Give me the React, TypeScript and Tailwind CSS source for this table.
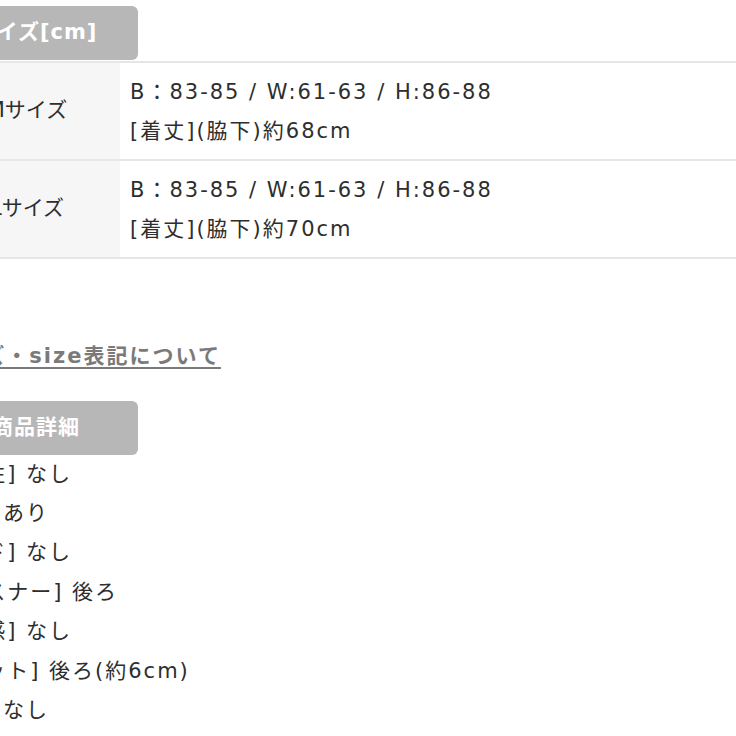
const sizes = [
  { label: "Mサイズ", spec: "B：83-85 / W:61-63 / H:86-88", length: "[着丈](脇下)約68cm" },
  { label: "Lサイズ", spec: "B：83-85 / W:61-63 / H:86-88", length: "[着丈](脇下)約70cm" },
];

const details = [
  "[伸縮性] なし",
  "[裏地] あり",
  "[パッド] なし",
  "[ファスナー] 後ろ",
  "[透け感] なし",
  "[スリット] 後ろ(約6cm)",
  "[光沢] なし",
];

function Tab({ children }: { children: React.ReactNode }) {
  return (
    <div className="flex h-[54px] w-[204px] items-center justify-center rounded-[6px] bg-[#b7b7b7] text-[21px] font-bold tracking-[1px] text-white">
      {children}
    </div>
  );
}

export default function App() {
  return (
    <div
      className="h-[736px] w-[736px] overflow-hidden bg-white text-[#2e2e2e]"
      style={{ fontFamily: '"DejaVu Sans", "Noto Sans CJK JP", sans-serif' }}
    >
      <div className="-ml-[66px] w-[802px] pt-[6px]">
        <Tab>サイズ[cm]</Tab>
        <div className="mt-[1px] border-t-2 border-[#e6e6e6]">
          {sizes.map((s) => (
            <div key={s.label} className="flex h-[98px] border-b-2 border-[#e6e6e6]">
              <div className="flex w-[186px] items-center justify-center bg-[#f6f6f6] text-[21px]">
                {s.label}
              </div>
              <div className="flex flex-col justify-center pl-[10px] pt-[2px] text-[21px] leading-[39px] tracking-[2px]">
                <p>{s.spec}</p>
                <p>{s.length}</p>
              </div>
            </div>
          ))}
        </div>

        <div className="mt-[82px] pl-[4px]">
          <a className="text-[21px] font-bold tracking-[2px] text-[#7a7a7a] underline underline-offset-4">
            サイズ・size表記について
          </a>
        </div>

        <div className="mt-[28px]">
          <Tab>商品詳細</Tab>
        </div>
        <ul className="-ml-[6px] text-[21px] leading-[39.4px] tracking-[2px]">
          {details.map((d) => (
            <li key={d}>{d}</li>
          ))}
        </ul>
      </div>
    </div>
  );
}
